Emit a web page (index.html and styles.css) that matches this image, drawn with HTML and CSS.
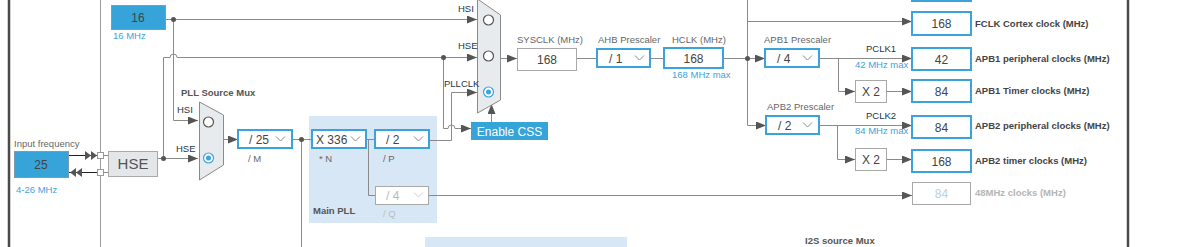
FILE: index.html
```html
<!DOCTYPE html>
<html lang="en">
<head>
    <meta charset="UTF-8">
    <title>Clock Configuration</title>
    <link rel="stylesheet" href="styles.css">
</head>
<body>
<div class="canvas">
<svg class="clock-tree" width="1186" height="247" viewBox="0 0 1186 247">
    <defs>
        <marker id="arr" viewBox="0 0 10 8" refX="10" refY="4" markerWidth="10" markerHeight="8" markerUnits="userSpaceOnUse" orient="auto">
            <path d="M0,0 L10,4 L0,8z" class="head"/>
        </marker>
    </defs>

    <!-- frame -->
    <line class="frame" x1="9" y1="0" x2="9" y2="247"/>
    <line class="frame" x1="1128" y1="0" x2="1128" y2="247"/>
    <line class="edge" x1="100.5" y1="0" x2="100.5" y2="247"/>

    <!-- PLL background -->
    <rect class="pll-bg" x="309" y="116" width="128" height="107"/>
    <rect class="pll-bg" x="425" y="237" width="202" height="12"/>

    <!-- wires -->
    <path class="wire" d="M165,19.5 H173.5 V120.5 H198" marker-end="url(#arr)"/>
    <path class="wire" d="M173,19.5 H477" marker-end="url(#arr)"/>
    <path class="wire" d="M163.5,158 V57.5 H170 a3.5,3.5 0 0 1 7,0 H477" marker-end="url(#arr)"/>
    <path class="wire" d="M157,158.5 H198" marker-end="url(#arr)"/>
    <path class="wire" d="M443.5,57.5 V128.5 H448 a3.5,3.5 0 0 1 7,0 H471" marker-end="url(#arr)"/>
    <path class="wire" d="M429,140.5 H451.5 V92.5 H477" marker-end="url(#arr)"/>
    <path class="wire" d="M491.5,122 V104" marker-end="url(#arr)"/>
    <path class="wire" d="M500,58.5 H517" marker-end="url(#arr)"/>
    <path class="wire" d="M577,58.5 H597"/>
    <path class="wire" d="M650,58.5 H664"/>
    <path class="wire" d="M723,58.5 H765" marker-end="url(#arr)"/>
    <path class="wire" d="M747.5,0 V125.5 H766" marker-end="url(#arr)"/>
    <path class="wire" d="M747.5,21.5 H912" marker-end="url(#arr)"/>
    <path class="wire" d="M819,58.5 H912" marker-end="url(#arr)"/>
    <path class="wire" d="M838.5,58.5 V91.5 H855" marker-end="url(#arr)"/>
    <path class="wire" d="M886,91.5 H912" marker-end="url(#arr)"/>
    <path class="wire" d="M819,125.5 H912" marker-end="url(#arr)"/>
    <path class="wire" d="M837.5,125.5 V159.5 H855" marker-end="url(#arr)"/>
    <path class="wire" d="M886,159.5 H912" marker-end="url(#arr)"/>
    <path class="wire" d="M223,139.5 H238" marker-end="url(#arr)"/>
    <path class="wire" d="M292,139.5 H312"/>
    <path class="wire" d="M301.5,139.5 V247"/>
    <path class="wire" d="M366,139.5 H375"/>
    <path class="wire" d="M368.5,139.5 V195.5 H375"/>
    <path class="wire" d="M429,195.5 H912" marker-end="url(#arr)"/>

    <!-- HSE input pins -->
    <path class="wire dark" d="M68,155.5 H98"/>
    <path class="head" d="M85,151 L91,155.5 L85,160z M91,151 L97,155.5 L91,160z"/>
    <path class="wire dark" d="M68,172.5 H98"/>
    <path class="head" d="M82,168 L76,172.5 L82,177z M76,168 L70,172.5 L76,177z"/>
    <rect class="pin" x="97.5" y="152.5" width="6" height="6"/>
    <rect class="pin" x="97.5" y="169.5" width="6" height="6"/>
    <path class="wire" d="M103.5,155.5 H108 M103.5,172.5 H108"/>

    <!-- junction dots -->
    <circle class="dot" cx="173.5" cy="19.5" r="2.5"/>
    <circle class="dot" cx="163.5" cy="158.5" r="2.5"/>
    <circle class="dot" cx="443.5" cy="57.5" r="2.5"/>
    <circle class="dot" cx="301.5" cy="139.5" r="2.5"/>
    <circle class="dot" cx="747.5" cy="58.5" r="2.5"/>

    <!-- oscillators -->
    <rect class="osc" x="111.5" y="5.5" width="54" height="24"/>
    <text class="val" x="138" y="22">16</text>
    <text class="hint" x="113" y="39">16 MHz</text>

    <text class="lbl" x="14" y="147">Input frequency</text>
    <rect class="osc" x="14.5" y="151.5" width="54" height="26"/>
    <text class="val" x="41" y="169">25</text>
    <text class="hint" x="16" y="193">4-26 MHz</text>

    <rect class="hse" x="108.5" y="151.5" width="49" height="25"/>
    <text class="hse-txt" x="133" y="169">HSE</text>

    <!-- PLL source mux -->
    <text class="lbl bold" x="181" y="96">PLL Source Mux</text>
    <polygon class="mux" points="199.5,102 223.5,115 223.5,165 199.5,180"/>
    <circle class="opt" cx="208.5" cy="122" r="5"/>
    <circle class="opt on" cx="208.5" cy="158" r="5"/>
    <circle class="opt-dot" cx="208.5" cy="158" r="2.5"/>
    <text class="sel" x="177" y="113">HSI</text>
    <text class="sel" x="176" y="152">HSE</text>

    <!-- PLL -->
    <rect class="combo" x="238" y="130" width="54" height="18"/>
    <text class="cval" x="249" y="144">/ 25</text>
    <path class="chev" d="M276,136.5 l4.5,4.5 l4.5,-4.5"/>
    <text class="lbl" x="248" y="162">/ M</text>

    <rect class="combo" x="312" y="130" width="54" height="18"/>
    <text class="cval" x="316" y="144">X 336</text>
    <path class="chev" d="M351,136.5 l4.5,4.5 l4.5,-4.5"/>
    <text class="lbl" x="319" y="162">* N</text>

    <rect class="combo" x="375" y="130" width="54" height="18"/>
    <text class="cval" x="386" y="144">/ 2</text>
    <path class="chev" d="M414,136.5 l4.5,4.5 l4.5,-4.5"/>
    <text class="lbl" x="383" y="162">/ P</text>

    <rect class="combo off" x="375.5" y="186.5" width="53" height="18"/>
    <text class="cval off" x="386" y="200">/ 4</text>
    <path class="chev off" d="M414,192.5 l4.5,4.5 l4.5,-4.5"/>
    <text class="lbl off" x="383" y="217">/ Q</text>
    <text class="lbl bold" x="313" y="214">Main PLL</text>

    <!-- system clock mux -->
    <polygon class="mux" points="477.5,-1 500.5,15 500.5,100 477.5,113"/>
    <circle class="opt" cx="488.5" cy="20" r="5"/>
    <circle class="opt" cx="488.5" cy="56" r="5"/>
    <circle class="opt on" cx="488.5" cy="92" r="5"/>
    <circle class="opt-dot" cx="488.5" cy="92" r="2.5"/>
    <text class="sel" x="458" y="12">HSI</text>
    <text class="sel" x="458" y="49">HSE</text>
    <text class="sel" x="444" y="87">PLLCLK</text>

    <rect class="css" x="471" y="122" width="77" height="18"/>
    <text class="css-txt" x="509.5" y="135.5">Enable CSS</text>

    <!-- bus prescalers -->
    <text class="lbl" x="517" y="43">SYSCLK (MHz)</text>
    <rect class="plain" x="517.5" y="48.5" width="59" height="22"/>
    <text class="val" x="547" y="64">168</text>

    <text class="lbl" x="598" y="43">AHB Prescaler</text>
    <rect class="combo" x="597" y="49" width="53" height="18"/>
    <text class="cval" x="609" y="63">/ 1</text>
    <path class="chev" d="M635,55.5 l4.5,4.5 l4.5,-4.5"/>

    <text class="lbl" x="672" y="43">HCLK (MHz)</text>
    <rect class="combo" x="664" y="48" width="59" height="20"/>
    <text class="val" x="693.5" y="63">168</text>
    <text class="hint" x="672" y="78">168 MHz max</text>

    <text class="lbl" x="764" y="43">APB1 Prescaler</text>
    <rect class="combo" x="765" y="49" width="54" height="18"/>
    <text class="cval" x="777" y="63">/ 4</text>
    <path class="chev" d="M803,55.5 l4.5,4.5 l4.5,-4.5"/>
    <text class="sel" x="866" y="52">PCLK1</text>
    <text class="hint" x="855" y="68">42 MHz max</text>
    <rect class="plain" x="855.5" y="80.5" width="31" height="22"/>
    <text class="val" x="871" y="96">X 2</text>

    <text class="lbl" x="767" y="110">APB2 Prescaler</text>
    <rect class="combo" x="766" y="116" width="53" height="18"/>
    <text class="cval" x="778" y="130">/ 2</text>
    <path class="chev" d="M803,122.5 l4.5,4.5 l4.5,-4.5"/>
    <text class="sel" x="866" y="119">PCLK2</text>
    <text class="hint" x="855" y="134">84 MHz max</text>
    <rect class="plain" x="855.5" y="148.5" width="31" height="22"/>
    <text class="val" x="871" y="164">X 2</text>

    <!-- outputs -->
    <rect class="combo" x="912" y="-20" width="59" height="21"/>
    <rect class="combo" x="912" y="12" width="59" height="23"/>
    <text class="val" x="941.5" y="28">168</text>
    <text class="out" x="975" y="27">FCLK Cortex clock (MHz)</text>
    <rect class="combo" x="912" y="48" width="59" height="22"/>
    <text class="val" x="941.5" y="64">42</text>
    <text class="out" x="975" y="62">APB1 peripheral clocks (MHz)</text>
    <rect class="combo" x="912" y="80" width="59" height="22"/>
    <text class="val" x="941.5" y="96">84</text>
    <text class="out" x="975" y="94">APB1 Timer clocks (MHz)</text>
    <rect class="combo" x="912" y="116" width="59" height="22"/>
    <text class="val" x="941.5" y="132">84</text>
    <text class="out" x="975" y="129">APB2 peripheral clocks (MHz)</text>
    <rect class="combo" x="912" y="150" width="59" height="22"/>
    <text class="val" x="941.5" y="166">168</text>
    <text class="out" x="975" y="164">APB2 timer clocks (MHz)</text>
    <rect class="plain" x="912.5" y="182.5" width="58" height="22"/>
    <text class="val off" x="941.5" y="198">84</text>
    <text class="out off" x="975" y="196">48MHz clocks (MHz)</text>

    <text class="lbl bold" x="805" y="244">I2S source Mux</text>
</svg>
</div>
</body>
</html>
```
FILE: styles.css
```css
body {
    margin: 0;
    background: #fff;
    font-family: "Liberation Sans", Arial, sans-serif;
}
.canvas {
    width: 1186px;
    height: 247px;
    overflow: hidden;
}
.clock-tree {
    display: block;
}
.frame {
    stroke: #4a4a4a;
    stroke-width: 2.5;
}
.edge {
    stroke: #9a9a9a;
    stroke-width: 1;
}
.pll-bg {
    fill: #d7e7f5;
}
.wire {
    fill: none;
    stroke: #8a8a8a;
    stroke-width: 1;
}
.wire.dark {
    stroke: #222;
}
.head {
    fill: #555;
}
.dot {
    fill: #555;
}
.pin {
    fill: #fff;
    stroke: #999;
}
.osc {
    fill: #36a3d9;
    stroke: #7a9db2;
}
.hse {
    fill: #e4e7ea;
    stroke: #a9a9a9;
}
.hse-txt {
    font-size: 15px;
    fill: #555;
    text-anchor: middle;
}
.mux {
    fill: #e8ebee;
    stroke: #8a8a8a;
}
.opt {
    fill: #fff;
    stroke: #555;
    stroke-width: 1.2;
}
.opt.on {
    stroke: #3aa5dc;
}
.opt-dot {
    fill: #3aa5dc;
}
.combo {
    fill: #fff;
    stroke: #3ba3dc;
    stroke-width: 2;
}
.combo.off,
.plain {
    fill: #fff;
    stroke: #a8a8a8;
    stroke-width: 1;
}
.chev {
    fill: none;
    stroke: #888;
    stroke-width: 1;
}
.chev.off {
    stroke: #ccc;
}
.css {
    fill: #36a3d9;
}
.css-txt {
    font-size: 12px;
    fill: #fff;
    text-anchor: middle;
}
.val {
    font-size: 12px;
    fill: #444;
    text-anchor: middle;
}
.cval {
    font-size: 12px;
    fill: #444;
}
.val.off,
.cval.off {
    fill: #b9cfe2;
}
.cval.off {
    fill: #bbb;
}
.lbl {
    font-size: 9.5px;
    fill: #666;
}
.lbl.bold {
    font-weight: bold;
    fill: #555;
}
.lbl.off {
    fill: #bbb;
}
.sel {
    font-size: 9.5px;
    fill: #24364a;
}
.hint {
    font-size: 9.5px;
    fill: #3ba3e0;
}
.out {
    font-size: 9.5px;
    font-weight: bold;
    fill: #444;
}
.out.off {
    fill: #b5b5b5;
}
```
